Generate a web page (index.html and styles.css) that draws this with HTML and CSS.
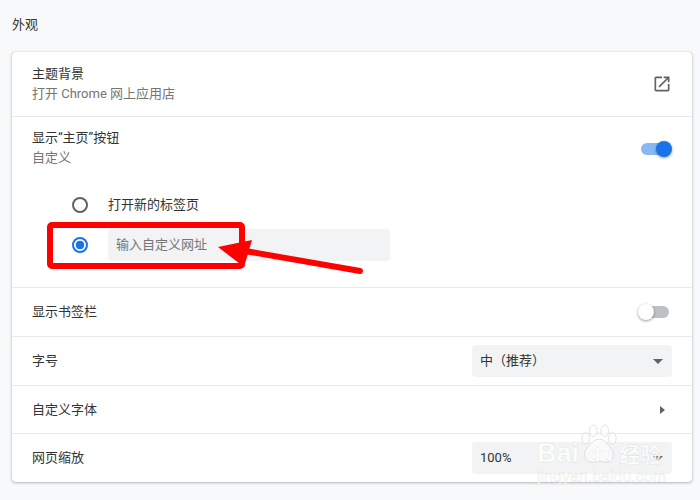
FILE: index.html
```html
<!DOCTYPE html>

<html>
    <head>
        <title>外观</title>
        <meta charset="utf-8">
        <link rel="stylesheet" href="styles.css">
    </head>

    <body>
        <h2 class="section-title">外观</h2>

        <div class="card">
            <div class="row row-two">
                <div class="row-text">
                    <div class="label">主题背景</div>
                    <div class="sub">打开 Chrome 网上应用店</div>
                </div>
                <svg class="icon-open" viewBox="0 0 24 24"><path d="M19 19H5V5h7V3H5c-1.11 0-2 .9-2 2v14c0 1.1.89 2 2 2h14c1.1 0 2-.9 2-2v-7h-2v7zM14 3v2h3.59l-9.83 9.83 1.41 1.41L19 6.41V10h2V3h-7z"/></svg>
            </div>

            <div class="row-group">
                <div class="row row-home">
                    <div class="row-text">
                        <div class="label">显示“主页”按钮</div>
                        <div class="sub">自定义</div>
                    </div>
                    <div class="toggle on"><span class="knob"></span></div>
                </div>
                <div class="radios">
                    <div class="radio-row">
                        <span class="radio"></span>
                        <span class="label">打开新的标签页</span>
                    </div>
                    <div class="radio-row">
                        <span class="radio checked"></span>
                        <div class="url-input">输入自定义网址</div>
                    </div>
                </div>
            </div>

            <div class="row">
                <div class="label">显示书签栏</div>
                <div class="toggle"><span class="knob"></span></div>
            </div>

            <div class="row">
                <div class="label">字号</div>
                <div class="select"><span>中（推荐）</span><i class="caret"></i></div>
            </div>

            <div class="row row-short">
                <div class="label">自定义字体</div>
                <i class="sub-arrow"></i>
            </div>

            <div class="row">
                <div class="label">网页缩放</div>
                <div class="select"><span>100%</span><i class="caret"></i></div>
            </div>
        </div>

        <!-- red annotation drawn over the screenshot -->
        <svg class="annotation" viewBox="0 0 700 500">
            <rect x="50" y="225" width="192" height="41" rx="2" fill="none" stroke="#ff0000" stroke-width="6"/>
            <path d="M360 271L245 251" stroke="#ff0000" stroke-width="6" stroke-linecap="round" fill="none"/>
            <path d="M218 247L252 240L244 267z" fill="#ff0000"/>
        </svg>

        <div class="watermark">
            <svg class="paw" viewBox="0 0 40 46">
                <ellipse cx="6" cy="15" rx="4" ry="6"/>
                <ellipse cx="14" cy="7" rx="4" ry="6"/>
                <ellipse cx="26" cy="7" rx="4" ry="6"/>
                <ellipse cx="34" cy="15" rx="4" ry="6"/>
                <path d="M20 16c6 0 9 5 13 10 5 6 1 15-7 14-2 0-4-1-6-1s-4 1-6 1c-8 1-12-8-7-14 4-5 7-10 13-10z"/>
            </svg>
            <div class="wm-main"><span>Bai</span><span class="wm-du">du</span><span class="wm-cn">经验</span></div>
            <div class="wm-url">jingyan.baidu.com</div>
        </div>
    </body>
</html>
```

FILE: styles.css
```css
* {box-sizing: border-box}

body {
  margin: 0;
  height: 500px;
  padding: 0 8px 0 12px;
  overflow: hidden;
  background-color: #f8f9fa;
  color: #333;
  font-family: Roboto, "Noto Sans CJK SC", sans-serif;
  font-size: 13px;
  line-height: 20px;
}

.section-title {
  margin: 0;
  padding: 15px 0 17px 0;
  font-size: 13px;
  font-weight: 400;
  line-height: 20px;
}

.card {
  background: #fff;
  border-radius: 4px;
  box-shadow: 0 0 1px rgba(60,64,67,.3), 0 1px 3px rgba(60,64,67,.35);
}

.row {
  display: flex;
  align-items: center;
  justify-content: space-between;
  height: 49px;
  padding: 0 20px;
  border-top: 1px solid #e8eaed;
}

.card > .row:first-child {
  border-top: none;
}

.row-two {
  height: 64px;
}

.row-short {
  height: 48px;
}

.row-group {
  border-top: 1px solid #e8eaed;
}

.row-home {
  height: 52px;
  padding-top: 11px;
  align-items: flex-start;
  border-top: none;
}

.sub {
  color: #757575;
}

.icon-open {
  width: 20px;
  height: 20px;
  fill: #5f6368;
}

.toggle {
  position: relative;
  width: 28px;
  height: 12px;
  margin-right: 3px;
  border-radius: 6px;
  background: #bdc1c6;
}

.row-home .toggle {
  margin-top: 15px;
}

.toggle .knob {
  position: absolute;
  top: -2px;
  left: -3px;
  width: 16px;
  height: 16px;
  border-radius: 50%;
  background: #fff;
  box-shadow: 0 1px 3px rgba(0,0,0,.4);
}

.toggle.on {
  background: #8ab8f5;
}

.toggle.on .knob {
  left: 15px;
  background: #1a73e8;
}

.radios {
  padding: 16px 0 26px 60px;
}

.radio-row {
  display: flex;
  align-items: center;
  gap: 20px;
  height: 40px;
}

.radio-row + .radio-row {
  height: 32px;
  margin-top: 4px;
}

.radio {
  width: 16px;
  height: 16px;
  border: 2px solid #5f6368;
  border-radius: 50%;
  background: #fff;
}

.radio.checked {
  border-color: #1a73e8;
  background: radial-gradient(circle, #1a73e8 4px, #fff 4.6px);
}

.url-input {
  width: 282px;
  height: 32px;
  padding: 0 8px;
  border-radius: 4px;
  background: #f1f3f4;
  color: #757575;
  line-height: 32px;
}

.select {
  display: flex;
  align-items: center;
  justify-content: space-between;
  width: 200px;
  height: 32px;
  padding: 0 9px 0 8px;
  border-radius: 4px;
  background: #f1f3f4;
}

.caret {
  width: 0;
  height: 0;
  border-left: 5px solid transparent;
  border-right: 5px solid transparent;
  border-top: 5px solid #5f6368;
}

.sub-arrow {
  width: 0;
  height: 0;
  margin-right: 7px;
  border-top: 4px solid transparent;
  border-bottom: 4px solid transparent;
  border-left: 5px solid #5f6368;
}

.annotation {
  position: absolute;
  top: 0;
  left: 0;
  width: 700px;
  height: 500px;
}

/* baidu stamp in the corner */
.watermark {
  position: absolute;
  top: 424px;
  left: 537px;
  width: 128px;
  height: 60px;
  color: rgba(255,255,255,.85);
  -webkit-text-stroke: 0.4px rgba(190,190,190,.45);
}

.paw {
  position: absolute;
  top: 0;
  left: 43px;
  width: 38px;
  height: 44px;
  fill: rgba(255,255,255,.6);
  stroke: rgba(190,190,190,.45);
  stroke-width: 1;
}

.wm-main {
  position: absolute;
  top: 15px;
  left: 0;
  display: flex;
  align-items: baseline;
  width: 128px;
  font-family: "Liberation Sans", sans-serif;
  font-size: 27px;
  font-weight: 700;
  line-height: 28px;
}

.wm-du {
  margin-left: 9px;
  font-size: 20px;
}

.wm-cn {
  margin-left: 7px;
  font-family: "Noto Sans CJK SC", sans-serif;
  font-size: 21px;
}

.wm-url {
  position: absolute;
  top: 45px;
  left: 0;
  font-family: "Liberation Sans", sans-serif;
  font-size: 16px;
  line-height: 16px;
}
```
